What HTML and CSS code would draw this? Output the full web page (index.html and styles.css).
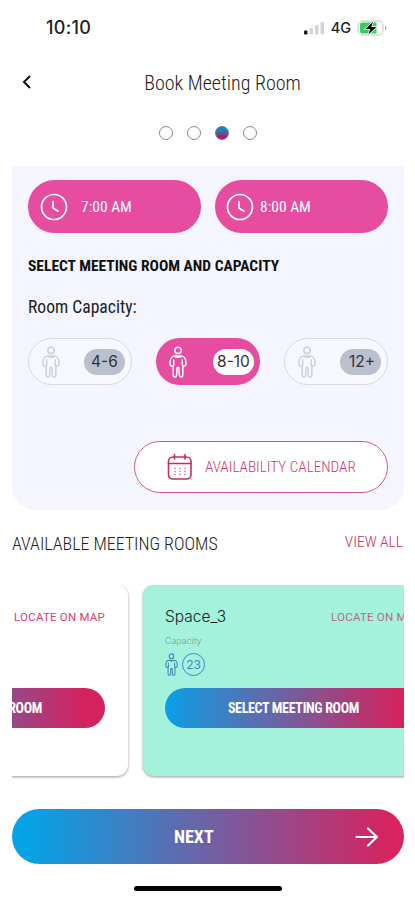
FILE: index.html
```html
<!DOCTYPE html>
<html lang="en">
<head>
<meta charset="utf-8">
<meta name="viewport" content="width=device-width, initial-scale=1">
<title>Book Meeting Room</title>
<link rel="stylesheet" href="styles.css">
</head>
<body>
<svg class="defs" width="0" height="0" aria-hidden="true">
  <symbol id="person" viewBox="0 0 18 32">
    <g fill="none" stroke="currentColor" stroke-width="1.500" stroke-linejoin="round" stroke-linecap="round">
      <circle cx="9" cy="4.400" r="3.200"/>
      <path d="M5.500 10h7c2.800 0 4.500 3.500 4.500 7.500 0 2.500-1.400 3.200-3.200 2V29c0 2.500-3.300 2.500-3.500 0l-.4-7.500H8.100L7.700 29c-.2 2.500-3.500 2.500-3.500 0v-9.500c-1.800 1.200-3.200.5-3.200-2C1 13.500 2.700 10 5.500 10zM4.700 19.500V14M13.300 19.500V14M5.500 10c1 1.600 6 1.600 7 0"/>
    </g>
  </symbol>
  <symbol id="clock" viewBox="0 0 28 28">
    <g fill="none" stroke="currentColor" stroke-width="1.700" stroke-linecap="round" stroke-linejoin="round">
      <circle cx="14" cy="14" r="12.500"/>
      <path d="M13 8.500v6.500l5 3.200"/>
    </g>
  </symbol>
</svg>
<div class="screen">
  <header class="status">
    <span class="time">10:10</span>
    <div class="signals">
      <svg width="22" height="14" viewBox="0 0 22 14"><rect x="1" y="9.500" width="3.500" height="4" rx="1.200" fill="#111"/><g fill="#d5d5d5"><rect x="6.500" y="7" width="3.500" height="6.500" rx="1"/><rect x="12" y="4" width="3.500" height="9.500" rx="1"/><rect x="17.500" y="1" width="3.500" height="12.500" rx="1"/></g></svg>
      <span class="network">4G</span>
      <svg width="31" height="16" viewBox="0 0 31 16"><rect x="1" y="1" width="25" height="14" rx="4.500" fill="#fff" stroke="#c4c4c4"/><path d="M5 2.500h14.500v11H5a2 2 0 0 1-2-2v-7a2 2 0 0 1 2-2z" fill="#35cf5d"/><path d="M28 5.500c2 .8 2 4.200 0 5z" fill="#aaa"/><path d="M16 1.800 8.500 9h4.800l-2 5.500L19.500 7h-5.200z" fill="#000" stroke="#fff" stroke-width="1.600" paint-order="stroke"/></svg>
    </div>
  </header>
  <nav class="titlebar">
    <svg class="back" width="12" height="16" viewBox="0 0 12 16"><path d="M9 2 3 8l6 6" fill="none" stroke="#111" stroke-width="2"/></svg>
    <h1 class="cond title">Book Meeting Room</h1>
  </nav>
  <div class="steps"><i></i><i></i><i class="on"></i><i></i></div>

  <section class="panel">
    <div class="times">
      <button class="slot"><svg width="28" height="28"><use href="#clock"/></svg><span class="cond">7:00 AM</span></button>
      <button class="slot end"><svg width="28" height="28"><use href="#clock"/></svg><span class="cond">8:00 AM</span></button>
    </div>
    <h2 class="cond">SELECT MEETING ROOM AND CAPACITY</h2>
    <p class="cond label">Room Capacity:</p>
    <div class="chips">
      <button class="chip"><svg width="18" height="32"><use href="#person"/></svg><span>4-6</span></button>
      <button class="chip active"><svg width="18" height="32"><use href="#person"/></svg><span>8-10</span></button>
      <button class="chip"><svg width="18" height="32"><use href="#person"/></svg><span class="plus">12+</span></button>
    </div>
    <button class="calendar">
      <svg width="26" height="28" viewBox="0 0 26 28"><g fill="none" stroke="#c92c5c" stroke-width="1.600"><rect x="1.500" y="4" width="22.500" height="22" rx="4.500"/><path d="M1.500 10.500h22.500M7.500 1.500v4.500M18 1.500v4.500" stroke-linecap="round"/></g><path d="M7 15.500h2m3 0h2m3 0h2M7 18.500h2m3 0h2m3 0h2M7 21.500h2m3 0h2m3 0h2" stroke="#e9a0b7" stroke-width="1.300"/></svg>
      <span class="cond">AVAILABILITY CALENDAR</span>
    </button>
  </section>

  <div class="listhead"><h3 class="cond">AVAILABLE MEETING ROOMS</h3><a class="cond">VIEW ALL</a></div>

  <section class="carousel">
    <article class="card">
      <div class="cardtop"><strong></strong><a>LOCATE ON MAP</a></div>
      <div class="cap"></div>
      <div class="people"></div>
      <button class="select"><span class="cond">SELECT MEETING ROOM</span></button>
    </article>
    <article class="card mint">
      <div class="cardtop"><strong>Space_3</strong><a>LOCATE ON MAP</a></div>
      <div class="cap">Capacity</div>
      <div class="people"><svg width="13" height="23"><use href="#person"/></svg><span>23</span></div>
      <button class="select"><span class="cond">SELECT MEETING ROOM</span></button>
    </article>
  </section>

  <button class="next"><span class="cond">NEXT</span><svg width="24" height="22" viewBox="0 0 24 22"><path d="M1.500 11H22M13 2.500l9 8.500-9 8.500" fill="none" stroke="#fff" stroke-width="2.200" stroke-linecap="round" stroke-linejoin="round"/></svg></button>
  <div class="home"></div>
</div>
</body>
</html>
```
FILE: styles.css
```css
* { box-sizing: border-box; }
body { margin: 0; background: #fff; color: #222; font-family: Roboto, "Liberation Sans", sans-serif; }
button { border: 0; padding: 0; margin: 0; font: inherit; color: inherit; background: none; display: flex; align-items: center; }
h1, h2, h3, p { margin: 0; font-weight: 400; }
svg { display: block; flex: none; }
.defs { position: absolute; }
.cond { font-stretch: 75%; white-space: nowrap; }
.screen { width: 415px; height: 900px; padding: 0 11px 0 12px; overflow: hidden; display: flex; flex-direction: column; }
.status { height: 56px; display: flex; align-items: center; justify-content: space-between; padding: 0 16px 0 34px; }
.time { font: 500 18px/24px Inter, sans-serif; letter-spacing: .3px; }
.signals { display: flex; align-items: center; }
.network { font: 500 14.500px/20px Inter, sans-serif; margin: 0 6px 0 6px; }
.titlebar { height: 54px; display: flex; align-items: center; justify-content: center; position: relative; padding-left: 29px; }
.back { position: absolute; left: 9px; top: 18px; }
.title { font-size: 20px; font-weight: 350; line-height: 24px; padding-bottom: 1px; }
.steps { height: 56px; display: flex; gap: 14px; justify-content: center; padding-top: 16px; }
.steps i { width: 14px; height: 14px; border: 1px solid #888; border-radius: 50%; }
.steps .on { border-color: #777; background: linear-gradient(#1683bd 30%, #b51768 80%); }
.panel { height: 344px; flex: none; background: #f4f5fe; border-radius: 0 0 22px 22px; padding: 14px 16px 0; display: flex; flex-direction: column; }
.times { display: flex; justify-content: space-between; }
.slot { width: 173px; height: 53px; border-radius: 27px; background: #e64ca0; color: #fff; padding-left: 12px; gap: 13px; font-size: 15.500px; font-weight: 450; }
.slot.end { padding-left: 11px; gap: 6px; }
.panel h2 { font-size: 15.500px; font-weight: 700; line-height: 20px; margin-top: 23px; color: #111; }
.label { font-size: 17.600px; line-height: 22px; margin-top: 20px; font-weight: 400; }
.chips { display: flex; justify-content: space-between; margin-top: 20px; }
.chip { width: 104px; height: 47px; border: 1px solid #d8dae2; border-radius: 24px; justify-content: space-between; padding: 0 6px 0 13px; color: #cdd1dc; background: #f7f8fe; }
.chip span { width: 41px; height: 26px; border-radius: 13px; background: #bbc0cf; color: #30323c; font: 400 15.500px/26px Inter, sans-serif; text-align: center; }
.chip .plus { padding-left: 3px; }
.chip.active { border: 0; background: #e64ca0; color: #fff; }
.chip.active span { background: #fff; color: #333; }
.calendar { width: 254px; height: 52px; border: 1px solid #d85b87; border-radius: 26px; background: #fff; margin: 56px 0 0 auto; padding-left: 32px; gap: 12px; color: #cf3a72; font-size: 15.200px; font-weight: 300; }
.listhead { height: 75px; flex: none; display: flex; justify-content: space-between; align-items: center; padding-bottom: 9px; }
.listhead h3 { font-size: 17.900px; font-weight: 350; }
.listhead a { font-size: 15.500px; font-weight: 350; color: #cb315d; padding: 0 1px 2px 0; }
.carousel { height: 201px; flex: none; display: flex; gap: 15px; justify-content: flex-start; overflow: hidden; }
.card { width: 301px; height: 191px; flex: none; border-radius: 11px; background: #fff; box-shadow: 0 1px 3px #0006; padding: 22px 22px 0; }
.card:first-child { margin-left: -186px; width: 302px; padding-left: 22px; padding-right: 23px; }
.mint { background: #a4f1dc; }
.cardtop { display: flex; height: 20px; justify-content: space-between; align-items: center; }
.cardtop strong { font: 350 15.500px/20px Inter, sans-serif; }
.cardtop a { font-size: 11.500px; letter-spacing: .22px; color: #d4436d; }
.mint a { color: #b46e83; }
.cap { height: 22px; padding-top: 6px; font-size: 9.500px; font-weight: 300; line-height: 16px; color: #7b9c92; }
.people { height: 39px; display: flex; align-items: center; gap: 4px; color: #438abd; padding-bottom: 10px; }
.people svg { margin-top: 2px; }
.people span { width: 23px; height: 23px; border: 1px solid #438abd; border-radius: 50%; text-align: center; font: 12px/21px Inter, sans-serif; margin-top: 1px; }
.select { width: 257px; height: 40px; border-radius: 20px; justify-content: center; background: linear-gradient(90deg, #0b9fe5, #d4225e 92%); color: #fff; font-size: 14px; letter-spacing: -.32px; font-weight: 700; }
.next { height: 55px; flex: none; margin-top: 23px; border-radius: 28px; background: linear-gradient(90deg, #06a2e6 4%, #6f61a5 50%, #d7235f 97%); color: #fff; font-size: 18px; font-weight: 700; justify-content: space-between; padding: 0 25px 0 162px; }
.home { width: 148px; height: 5px; border-radius: 3px; background: #000; margin: 22px 0 0 122px; }
```
